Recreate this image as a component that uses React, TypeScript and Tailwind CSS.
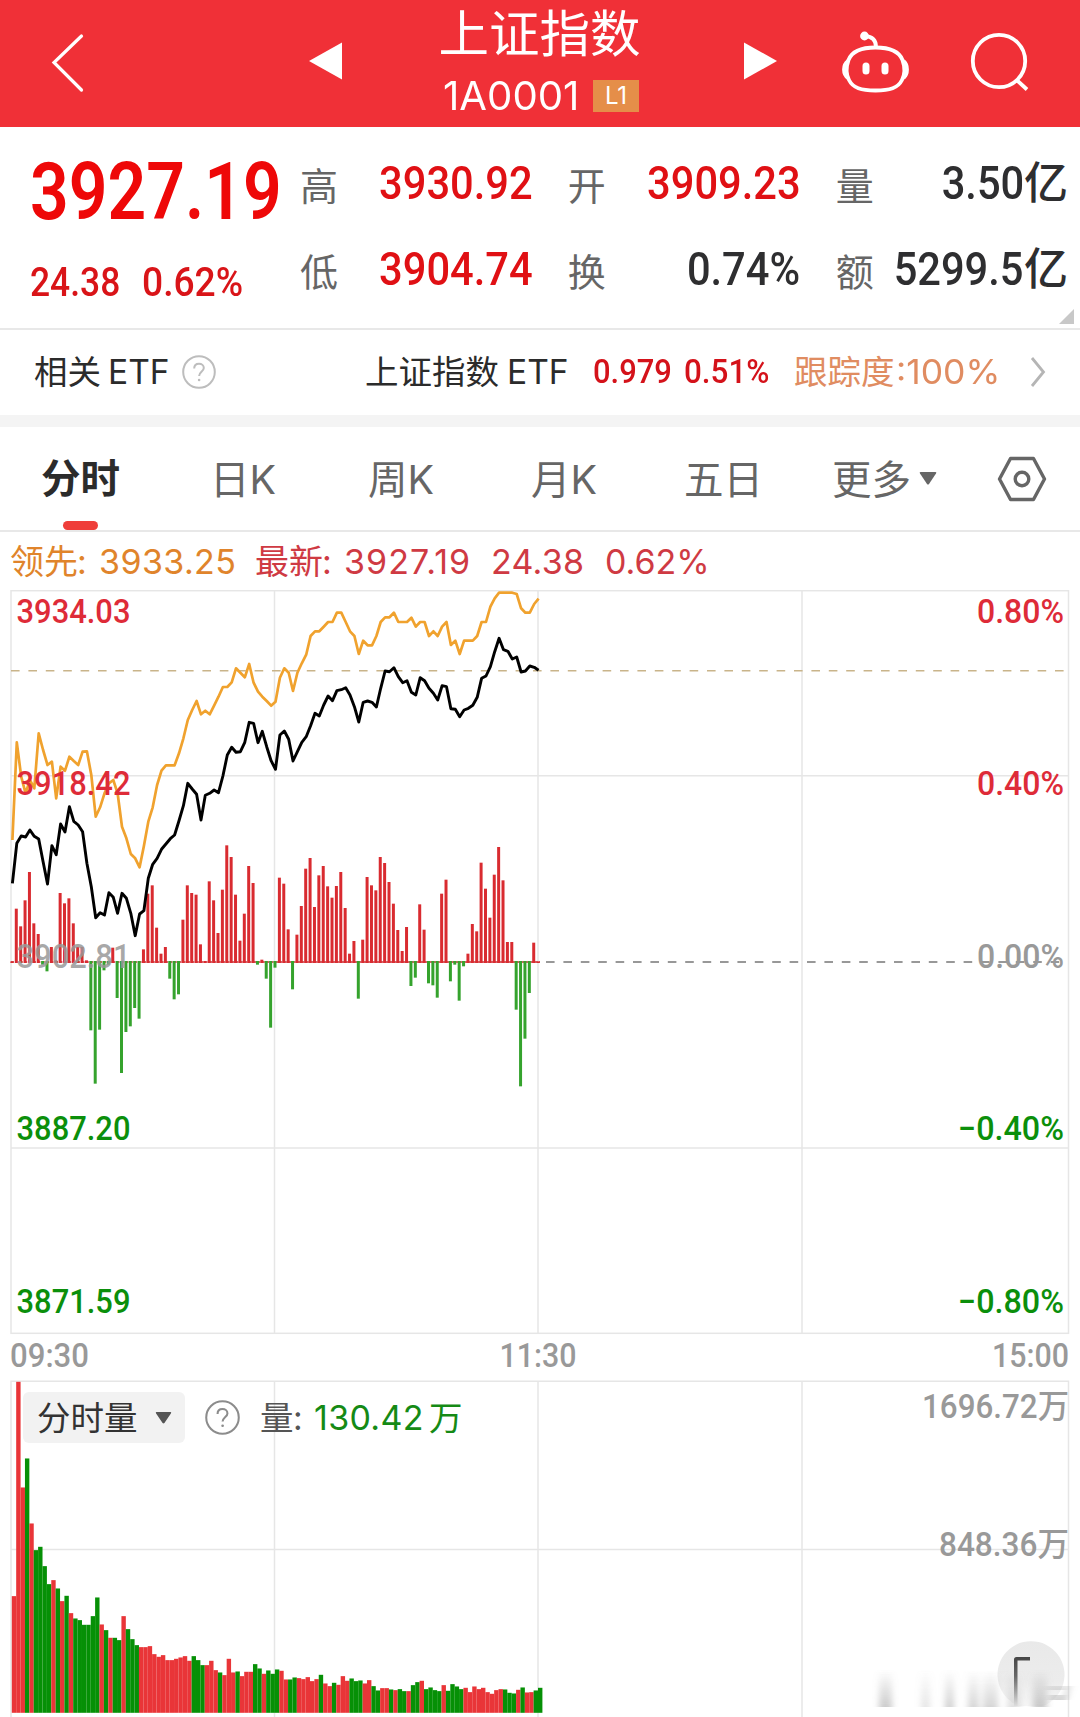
import React from 'react';

type Tone = 'up' | 'flat';

interface Stat {
  label: string;
  value: string;
  unit?: string;
  tone: Tone;
}

const stats: Stat[] = [
  { label: '高', value: '3930.92', tone: 'up' },
  { label: '开', value: '3909.23', tone: 'up' },
  { label: '量', value: '3.50', unit: '亿', tone: 'flat' },
  { label: '低', value: '3904.74', tone: 'up' },
  { label: '换', value: '0.74%', tone: 'flat' },
  { label: '额', value: '5299.5', unit: '亿', tone: 'flat' },
];

// One entry per minute, 09:30 - 11:30, in thirds of a pixel below the plot origin
const priceLine = [
  910, 790, 768, 771, 750, 769, 777, 845, 912, 797, 824, 732, 756, 680, 724, 735, 755, 850, 920, 1013,
  998, 1005, 938, 952, 1000, 940, 955, 1000, 1067, 1002, 992, 895, 853, 835, 808, 792, 776, 765, 722, 677,
  610, 627, 643, 720, 646, 640, 630, 638, 588, 525, 502, 517, 515, 487, 427, 430, 488, 454, 500, 542,
  568, 465, 453, 478, 543, 515, 487, 470, 437, 400, 408, 375, 348, 362, 332, 329, 323, 345, 380, 426,
  367, 363, 367, 381, 325, 273, 275, 263, 290, 308, 302, 337, 345, 293, 302, 325, 340, 360, 317, 320,
  386, 388, 410, 390, 385, 376, 352, 295, 288, 260, 215, 175, 209, 214, 237, 231, 276, 273, 258, 262,
  271,
];

const leadLine = [
  780, 487, 590, 640, 600, 625, 460, 510, 555, 545, 655, 560, 572, 530, 543, 555, 515, 514, 585, 710,
  682, 640, 610, 600, 640, 740, 775, 822, 835, 862, 798, 725, 682, 615, 572, 556, 556, 556, 520, 475,
  420, 390, 363, 403, 392, 403, 377, 350, 321, 321, 307, 265, 278, 292, 252, 308, 335, 350, 363, 377,
  365, 293, 265, 278, 333, 278, 250, 224, 168, 154, 154, 140, 126, 126, 98, 98, 126, 154, 168, 222,
  182, 196, 196, 168, 126, 112, 112, 98, 126, 126, 126, 113, 140, 126, 126, 168, 154, 168, 140, 126,
  195, 182, 222, 182, 182, 182, 168, 126, 126, 80, 55, 38, 38, 38, 38, 42, 85, 98, 98, 72,
  56,
];

// Strength bars around the zero line, same unit
const strength = [
  2, 160, 107, 185, 270, 116, 84, -8, -28, 45, 5, 207, 176, 191, 116, 45, 45, 5, -205, -365,
  -203, -25, -8, 43, -108, -333, -210, -193, -138, -170, 38, 205, 230, 103, 25, 45, -50, -112, -97, 127,
  230, 207, 202, 53, 3, 242, 185, 87, 217, 350, 315, 202, 64, 145, 288, 237, -8, 7, -50, -197,
  -17, 253, 235, 98, -82, 82, 168, 280, 312, 165, 260, 288, 227, 193, 228, 270, 162, 25, 63, -110,
  67, 255, 230, 215, 315, 297, 240, 175, 96, 33, 105, -72, -47, 173, 97, -64, -70, -107, 205, 247,
  -58, -8, -116, -13, 25, 114, 92, 298, 220, 133, 262, 345, 245, 60, 60, -143, -373, -230, -93, 58,
  2,
];

const volume = [
  350, 993, 676, 763, 568, 488, 498, 440, 386, 398, 373, 335, 351, 299, 283, 278, 264, 264, 290, 346,
  265, 248, 225, 225, 218, 290, 251, 221, 203, 197, 197, 200, 176, 168, 173, 158, 158, 162, 166, 170,
  156, 170, 158, 143, 143, 156, 128, 121, 113, 162, 121, 124, 110, 123, 123, 146, 133, 117, 127, 117,
  130, 126, 100, 100, 106, 104, 101, 107, 95, 101, 114, 88, 80, 90, 84, 110, 96, 103, 95, 97,
  88, 98, 80, 67, 74, 74, 70, 68, 71, 65, 65, 83, 92, 96, 71, 76, 68, 65, 83, 66,
  86, 79, 71, 75, 62, 79, 71, 75, 62, 57, 68, 71, 70, 60, 58, 69, 76, 61, 62, 67,
  75,
];

const volumeSide =
  'RRRGRGGGGRGRGRGGGGGG' +
  'RGRGGRGGGRRRRRRRRRRR' +
  'RGGGRRRGRRRGRRRGGRGG' +
  'GRRGGRRRRRGRRGRRRGGG' +
  'RRGGRRGRGGRGGRGGGGRG' +
  'GGGRRRRRRRRRGGGRGRRG' +
  'G';

const STEP = 4.385;

const toPoints = (values: number[]) =>
  values.map((v, i) => `${(12.4 + i * STEP).toFixed(1)},${(580 + v / 3).toFixed(1)}`).join(' ');

const gridX = [274.5, 538, 802];

interface AxisProps {
  x: number;
  y: number;
  width: number;
  color: string;
  end?: boolean;
  children: string;
}

function AxisLabel({ x, y, width, color, end, children }: AxisProps) {
  return (
    <text
      x={x}
      y={y}
      fill={color}
      textAnchor={end ? 'end' : 'start'}
      textLength={width}
      lengthAdjust="spacingAndGlyphs"
      className="font-['Roboto','Noto_Sans_CJK_SC',sans-serif] text-[33px] font-medium"
    >
      {children}
    </text>
  );
}

function PriceChart() {
  return (
    <svg className="block" width="1080" height="790" viewBox="0 590 1080 790">
      <g stroke="#e6e6e6" strokeWidth="1.5" fill="none">
        <rect x="11" y="590.7" width="1057.5" height="742.6" />
        {gridX.map(x => (
          <line key={x} x1={x} x2={x} y1="590" y2="1333" />
        ))}
        <line x1="11" x2="1068" y1="775.7" y2="775.7" />
        <line x1="11" x2="1068" y1="1148" y2="1148" />
      </g>

      <line x1="11" x2="1068" y1="670.8" y2="670.8" stroke="#c9b48a" strokeWidth="1.6" strokeDasharray="8.6 8.8" />
      <line x1="546" x2="1068" y1="962" y2="962" stroke="#777" strokeWidth="1.6" strokeDasharray="8.6 8.8" />
      <line x1="11" x2="540" y1="962" y2="962" stroke="#c8323a" strokeWidth="1.6" strokeDasharray="3 1.4" />

      {strength.map((v, i) => (
        <line
          key={i}
          x1={11.9 + i * STEP}
          x2={11.9 + i * STEP}
          y1={v < 0 ? 961 : 963}
          y2={962 - v / 3}
          stroke={v < 0 ? '#35a32d' : '#d92b30'}
          strokeWidth="3"
        />
      ))}

      <polyline points={toPoints(leadLine)} fill="none" stroke="#f0a22e" strokeWidth="2.7" strokeLinejoin="round" />
      <polyline points={toPoints(priceLine)} fill="none" stroke="#000" strokeWidth="2.9" strokeLinejoin="round" />

      <AxisLabel x={16.5} y={622.5} width={114} color="#de2b38">3934.03</AxisLabel>
      <AxisLabel x={16.5} y={794.8} width={114} color="#de2b38">3918.42</AxisLabel>
      <AxisLabel x={16.5} y={967.5} width={114} color="#999999d9">3902.81</AxisLabel>
      <AxisLabel x={16.5} y={1140} width={114} color="#0b8f0b">3887.20</AxisLabel>
      <AxisLabel x={16.5} y={1312.5} width={114} color="#0b8f0b">3871.59</AxisLabel>
      <AxisLabel end x={1064} y={622.5} width={87} color="#de2b38">0.80%</AxisLabel>
      <AxisLabel end x={1064} y={794.8} width={87} color="#de2b38">0.40%</AxisLabel>
      <AxisLabel end x={1064} y={967.5} width={87} color="#999">0.00%</AxisLabel>
      <AxisLabel end x={1064} y={1140} width={106} color="#0b8f0b">−0.40%</AxisLabel>
      <AxisLabel end x={1064} y={1312.5} width={106} color="#0b8f0b">−0.80%</AxisLabel>

      <AxisLabel x={10} y={1367.3} width={79} color="#999">09:30</AxisLabel>
      <AxisLabel x={499.5} y={1367.3} width={77} color="#999">11:30</AxisLabel>
      <AxisLabel end x={1069} y={1367.3} width={77} color="#999">15:00</AxisLabel>
    </svg>
  );
}

function VolumeChart() {
  return (
    <svg className="block" width="1080" height="337" viewBox="0 1380 1080 337">
      <defs>
        <linearGradient id="fade" x1="0" y1="1670" x2="0" y2="1707" gradientUnits="userSpaceOnUse">
          <stop offset="0" stopColor="#999" stopOpacity="0" />
          <stop offset="1" stopColor="#999" stopOpacity="0.5" />
        </linearGradient>
        <linearGradient id="stem" x1="0" y1="1656" x2="0" y2="1706" gradientUnits="userSpaceOnUse">
          <stop offset="0" stopColor="#444" />
          <stop offset="0.4" stopColor="#666" />
          <stop offset="1" stopColor="#ddd" />
        </linearGradient>
        <linearGradient id="disc" x1="0" y1="1641" x2="0" y2="1707" gradientUnits="userSpaceOnUse">
          <stop offset="0" stopColor="#e9e9e9" />
          <stop offset="0.6" stopColor="#ececec" />
          <stop offset="1" stopColor="#f6f6f6" />
        </linearGradient>
        <filter id="soft" x="-20%" y="-20%" width="140%" height="140%">
          <feGaussianBlur stdDeviation="3 0.6" />
        </filter>
      </defs>

      <g stroke="#e6e6e6" strokeWidth="1.5" fill="none">
        <path d="M11 1717V1381.2H1068.5V1717" />
        {gridX.map(x => (
          <line key={x} x1={x} x2={x} y1="1381" y2="1717" />
        ))}
        <line x1="11" x2="1068" y1="1549.4" y2="1549.4" />
      </g>

      {volume.map((v, i) => (
        <rect
          key={i}
          x={11.8 + i * STEP}
          y={1712.8 - v / 3}
          width={4.4}
          height={v / 3}
          fill={volumeSide[i] === 'G' ? '#069006' : '#e93538'}
        />
      ))}

      <AxisLabel end x={1069} y={1418} width={147} color="#999">1696.72万</AxisLabel>
      <AxisLabel end x={1069} y={1556} width={130} color="#999">848.36万</AxisLabel>

      {/* Floating button, cut off by the page fade */}
      <path d="M1019 1706A33.5 33.5 0 1 1 1043 1706Z" fill="url(#disc)" />
      <g fill="url(#fade)" filter="url(#soft)">
        <rect x="879" y="1670" width="13" height="37" />
        <rect x="921" y="1670" width="9" height="37" opacity="0.5" />
        <rect x="945" y="1670" width="9" height="37" opacity="0.9" />
        <rect x="968" y="1670" width="11" height="37" opacity="0.8" />
        <rect x="983" y="1670" width="15" height="37" opacity="0.8" />
        <rect x="1007" y="1670" width="13" height="37" opacity="0.6" />
        <rect x="1033" y="1670" width="14" height="37" />
        <path d="M1048 1686H1072L1067 1700H1050V1695H1064L1065 1690H1048Z" />
      </g>
      <path d="M1030 1657H1016.500Q1014 1657 1014 1659.500V1706H1017.500V1660.500H1030Z" fill="url(#stem)" />
    </svg>
  );
}

function RobotIcon() {
  return (
    <svg width="68" height="64" viewBox="842 30 68 64" fill="none" stroke="#fff" strokeWidth="3.800">
      <path d="M875.500 47.500C890 47.500 899 51 902.500 60C905 67 905 74 902 80C898 88 890 90.500 875.500 90.500C861 90.500 853 88 849 80C846 74 846 67 848.500 60C852 51 861 47.500 875.500 47.500Z" />
      <path d="M848 61Q844 64 844 69.500Q844 75 848 78M903.500 61Q907 64 907 69.500Q907 75 903.500 78" />
      <path d="M876 47C876 40 872 36.500 865 36" />
      <circle cx="864.500" cy="36" r="2.500" fill="#fff" />
      <path d="M866 66V71M885 66V71" strokeWidth="7" strokeLinecap="round" />
    </svg>
  );
}

function HelpIcon({ size, color }: { size: number; color: string }) {
  return (
    <svg width={size} height={size} viewBox="0 0 34 34" fill="none" stroke={color} strokeWidth="2">
      <circle cx="17" cy="17" r="15.800" />
      <path d="M12.200 13.600C12.200 10.600 14.200 8.800 17 8.800C19.800 8.800 21.800 10.600 21.800 13C21.800 16.200 17.100 16.800 17.100 21" />
      <circle cx="17.100" cy="25" r="0.700" fill={color} strokeWidth="1.200" />
    </svg>
  );
}

function Header() {
  return (
    <header className="h-[127px] bg-[#f03037] flex items-start text-white">
      <div className="w-[309px] pl-[51px] pt-[33px]">
        <svg width="34" height="60" viewBox="0 0 34 60" fill="none" stroke="#fff" strokeWidth="3.200" strokeLinecap="round">
          <path d="M30.500 3L3 29.500L30.500 57" />
        </svg>
      </div>
      <svg className="mt-[42px]" width="34" height="38" viewBox="0 0 34 38" fill="#fff">
        <path d="M0 19L33 0.500V37.500Z" />
      </svg>
      <div className="w-[401px] flex flex-col items-center">
        <h1 className="font-['Inter','Noto_Sans_CJK_SC',sans-serif] font-normal text-[50.500px] leading-[67px] pr-[8px]">上证指数</h1>
        <div className="flex items-center h-[58px] pr-[5px]">
          <span className="w-[150px] font-['Inter',sans-serif] text-[39px] leading-[40px] origin-left scale-x-[1.03]">1A0001</span>
          <span className="w-[46px] h-[32px] bg-[#e58e49] flex items-center justify-center font-['Inter',sans-serif] text-[24px] leading-none">L1</span>
        </div>
      </div>
      <svg className="mt-[42px]" width="34" height="38" viewBox="0 0 34 38" fill="#fff">
        <path d="M33 19L0 0.500V37.500Z" />
      </svg>
      <div className="ml-[64px] mt-[30px]">
        <RobotIcon />
      </div>
      <svg className="ml-[60px] mt-[32px]" width="60" height="60" viewBox="0 0 60 60" fill="none" stroke="#fff" strokeWidth="3.800">
        <circle cx="29" cy="29" r="26.200" />
        <path d="M46 47.500L57 57.500" />
      </svg>
    </header>
  );
}

function Quote() {
  return (
    <section className="relative h-[203px] border-b-2 border-[#e8e8e8] pl-[30px] flex font-['Roboto',sans-serif]">
      <div className="w-[270px] text-[#ee0808]">
        <div className="h-[130px] flex items-center">
          <span className="text-[79px] font-semibold whitespace-nowrap origin-left scale-x-[0.858]">3927.19</span>
        </div>
        <div className="h-[52px] flex items-center text-[40px] font-medium text-[#d91418]">
          <span className="w-[112px] origin-left scale-x-[0.885]">24.38</span>
          <span className="origin-left scale-x-[0.93]">0.62%</span>
        </div>
      </div>
      <div className="grid grid-cols-3 gap-x-[35.5px] w-[768px] pt-[13px] auto-rows-[86px]">
        {stats.map(s => (
          <div key={s.label} className="h-[86px] flex items-center justify-between">
            <span className="font-['Noto_Sans_CJK_SC',sans-serif] text-[38px] leading-[40px] pt-[1px] text-[#666]">{s.label}</span>
            <span className={`flex items-center text-[46px] leading-[50px] font-medium ${s.tone === 'up' ? 'text-[#e01014]' : 'text-[#2e2e30]'}`}>
              <span className="origin-right scale-x-[0.905]">{s.value}</span>
              {s.unit && (
                <span className="font-['Inter','Noto_Sans_CJK_SC',sans-serif] text-[44px] leading-[46px] pb-[1px]">{s.unit}</span>
              )}
            </span>
          </div>
        ))}
      </div>
      <svg className="absolute right-[6px] bottom-[4px]" width="15" height="15" viewBox="0 0 15 15" fill="#c8c8c8">
        <path d="M15 0V15H0Z" />
      </svg>
    </section>
  );
}

function EtfRow() {
  return (
    <section className="h-[85px] pb-[1px] flex items-center pl-[34px] text-[#2b2b2b] font-['Inter','Noto_Sans_CJK_SC',sans-serif] text-[33.5px] leading-[40px]">
      <span className="w-[74px]">相关</span>
      <span className="w-[74px]">ETF</span>
      <span className="w-[183px]">
        <HelpIcon size={34} color="#bdbdbd" />
      </span>
      <span className="w-[142px]">上证指数</span>
      <span className="w-[86px]">ETF</span>
      <span className="w-[91px] pb-[2px] font-['Roboto',sans-serif] text-[34px] font-medium text-[#d4121a] origin-left scale-x-[0.91]">0.979</span>
      <span className="w-[110px] pb-[2px] font-['Roboto',sans-serif] text-[34px] font-medium text-[#d4121a] origin-left scale-x-[0.925]">0.51%</span>
      <span className="w-[102px] text-[#e08c61]">跟踪度</span>
      <span className="w-[134px] text-[#e08c61] text-[34px] origin-left scale-x-[1.045]">:100%</span>
      <svg width="16" height="32" viewBox="0 0 16 32" fill="none" stroke="#b5b5b5" strokeWidth="2.800">
        <path d="M2 2L13.500 16L2 30" />
      </svg>
    </section>
  );
}

const tabs = [
  { name: '日K', box: 'w-[158px]' },
  { name: '周K', box: 'w-[163px]' },
  { name: '月K', box: 'w-[153px]' },
  { name: '五日', box: 'w-[148px]' },
];

function Tabs() {
  return (
    <nav className="h-[105px] border-b-2 border-[#e8e8e8] flex items-center pl-[41px] text-[#666] font-['Inter','Noto_Sans_CJK_SC',sans-serif] text-[39.5px] leading-[50px]">
      <div className="relative w-[169px] pt-[1px] text-[#2b2b2b] font-bold">
        分时
        <span className="absolute left-[22px] top-[68px] w-[35px] h-[9px] rounded-full bg-[#ef3e3a]" />
      </div>
      {tabs.map(t => (
        <div key={t.name} className={`${t.box} pt-[2px]`}>{t.name}</div>
      ))}
      <div className="w-[165px] flex items-center gap-[8px]">
        <span className="pt-[2px]">更多</span>
        <svg width="18" height="13" viewBox="0 0 18 13" fill="#666">
          <path d="M1.500 0H16.500Q18 0 17 1.500L10 12Q9 13 8 12L1 1.500Q0 0 1.500 0Z" />
        </svg>
      </div>
      <svg width="50" height="46" viewBox="0 0 50 46" fill="none" stroke="#666" strokeWidth="3.400">
        <path d="M13.500 2.500H36.500L47.500 23L36.500 43.500H13.500L2.500 23Z" strokeLinejoin="round" />
        <circle cx="25" cy="23" r="6.800" />
      </svg>
    </nav>
  );
}

function Legend() {
  return (
    <div className="h-[58px] pt-[1px] flex items-center pl-[10px] font-['Inter','Noto_Sans_CJK_SC',sans-serif] text-[34px] leading-[40px] text-[#cf3a43] whitespace-nowrap">
      <span className="w-[67px] text-[#e0842b]">领先</span>
      <span className="w-[22px] text-[#e0842b]">:</span>
      <span className="w-[156px] text-[#e0842b] tracking-[0.4px]">3933.25</span>
      <span className="w-[67px]">最新</span>
      <span className="w-[22px]">:</span>
      <span className="w-[147px] tracking-[1.1px]">3927.19</span>
      <span className="w-[114px] tracking-[0.3px]">24.38</span>
      <span>0.62%</span>
    </div>
  );
}

export default function App() {
  return (
    <div className="w-[1080px] h-[1717px] overflow-hidden bg-white">
      <Header />
      <Quote />
      <EtfRow />
      <div className="h-[12px] bg-[#f4f4f4]" />
      <Tabs />
      <Legend />
      <PriceChart />
      <div className="relative">
        <VolumeChart />
        <div className="absolute left-[23px] top-[12px] h-[51px] flex items-center font-['Inter','Noto_Sans_CJK_SC',sans-serif] text-[33.5px] leading-[40px]">
          <button className="w-[162px] h-[51px] rounded-md bg-[#f2f2f2] text-[#333] flex items-center pl-[14px]">
            <span className="w-[118px] text-left">分时量</span>
            <svg width="17" height="12" viewBox="0 0 18 13" fill="#555">
              <path d="M1.500 0H16.500Q18 0 17 1.500L10 12Q9 13 8 12L1 1.500Q0 0 1.500 0Z" />
            </svg>
          </button>
          <span className="ml-[20px] w-[55px]">
            <HelpIcon size={35} color="#8c8c8c" />
          </span>
          <span className="w-[33px] text-[#555]">量</span>
          <span className="w-[21px] text-[#555]">:</span>
          <span className="w-[115px] text-[34px] text-[#158a15] tracking-[0.3px]">130.42</span>
          <span className="text-[#158a15]">万</span>
        </div>
      </div>
    </div>
  );
}
